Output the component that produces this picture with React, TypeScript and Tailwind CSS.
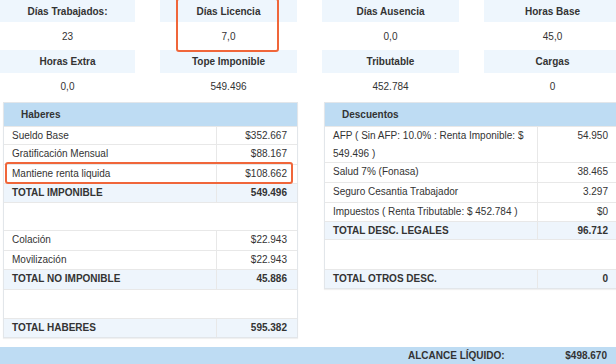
import React from 'react'

type Row = {
  label?: string
  value?: string
  total?: boolean
  h: string
}

const TOP_ITEMS = [
  [
    { title: 'Días Trabajados:', value: '23' },
    { title: 'Días Licencia', value: '7,0' },
    { title: 'Días Ausencia', value: '0,0' },
    { title: 'Horas Base', value: '45,0' },
  ],
  [
    { title: 'Horas Extra', value: '0,0' },
    { title: 'Tope Imponible', value: '549.496' },
    { title: 'Tributable', value: '452.784' },
    { title: 'Cargas', value: '0' },
  ],
]

const HABERES: Row[] = [
  { label: 'Sueldo Base', value: '$352.667', h: 'h-[18px]' },
  { label: 'Gratificación Mensual', value: '$88.167', h: 'h-[20px]' },
  { label: 'Mantiene renta liquida', value: '$108.662', h: 'h-[19px]' },
  { label: 'TOTAL IMPONIBLE', value: '549.496', total: true, h: 'h-[19px]' },
  { h: 'h-[28px]' },
  { label: 'Colación', value: '$22.943', h: 'h-[20px]' },
  { label: 'Movilización', value: '$22.943', h: 'h-[19px]' },
  { label: 'TOTAL NO IMPONIBLE', value: '45.886', total: true, h: 'h-[20px]' },
  { h: 'h-[29px]' },
  { label: 'TOTAL HABERES', value: '595.382', total: true, h: 'h-[19px]' },
]

const DESCUENTOS: Row[] = [
  {
    label: 'AFP ( Sin AFP: 10.0% : Renta Imponible: $ 549.496 )',
    value: '54.950',
    h: 'h-[36px]',
  },
  { label: 'Salud 7% (Fonasa)', value: '38.465', h: 'h-[20px]' },
  { label: 'Seguro Cesantia Trabajador', value: '3.297', h: 'h-[20px]' },
  { label: 'Impuestos ( Renta Tributable: $ 452.784 )', value: '$0', h: 'h-[19px]' },
  { label: 'TOTAL DESC. LEGALES', value: '96.712', total: true, h: 'h-[18px]' },
  { h: 'h-[30px]' },
  { label: 'TOTAL OTROS DESC.', value: '0', total: true, h: 'h-[19px]' },
]

const Tabla = ({ title, rows }: { title: string; rows: Row[] }) => {
  return (
    <div className="w-[295px] border border-[#e2e6ea] shadow-[0_1px_1px_rgba(0,0,0,0.06)]">
      <div className="h-[23px] bg-[#bedcf3] pl-[17px] flex items-center font-bold">
        {title}
      </div>
      {rows.map((row, i) => {
        /** Fila vacía, sin divisor */
        if (!row.label)
          return <div key={i} className={`${row.h} border-t border-[#e8e8e8]`} />
        return (
          <div
            key={i}
            className={`${row.h} flex border-t border-[#e8e8e8] ${
              row.total ? 'bg-[#eef5fc] font-bold' : ''
            }`}
          >
            <div className="w-[213px] pl-[8px] pr-2 leading-[18px] border-r border-[#e8e8e8] flex items-start">
              <span>{row.label}</span>
            </div>
            <div className="flex-1 pr-[10px] leading-[18px] text-right">
              {row.value}
            </div>
          </div>
        )
      })}
    </div>
  )
}

export default function App() {
  return (
    <div className="relative w-[616px] h-[364px] overflow-hidden bg-white font-['Liberation_Sans',Arial,sans-serif] text-[10px] text-[#333]">
      {/* Resumen superior */}
      {TOP_ITEMS.map((group, g) => (
        <div
          key={g}
          className="grid grid-cols-[135px_137px_137px_137px] gap-x-[25px]"
        >
          {group.map((item) => (
            <div
              key={item.title}
              className={`${g === 0 ? 'h-[22px]' : 'h-[23px]'} bg-[#eef6fd] flex items-center justify-center font-bold`}
            >
              {item.title}
            </div>
          ))}
          {group.map((item) => (
            <div
              key={item.title + '-v'}
              className={`${g === 0 ? 'h-[28px]' : 'h-[27px]'} flex items-center justify-center`}
            >
              {item.value}
            </div>
          ))}
        </div>
      ))}

      {/* Tablas */}
      <div className="mt-[2px] flex items-start">
        <div className="ml-[3px]">
          <Tabla title="Haberes" rows={HABERES} />
        </div>
        <div className="ml-[26px]">
          <Tabla title="Descuentos" rows={DESCUENTOS} />
        </div>
      </div>

      {/* Alcance líquido */}
      <div className="mt-[9px] h-[24px] bg-[#bedcf3] flex items-start pt-[3px] leading-[12px] font-bold">
        <span className="ml-[408px]">ALCANCE LÍQUIDO:</span>
        <span className="ml-auto mr-[9px]">$498.670</span>
      </div>

      {/* Marcas de resaltado */}
      <div className="absolute left-[176px] top-[-2px] w-[103px] h-[54px] border-2 border-[#f0663a] rounded-[3px]" />
      <div className="absolute left-[5px] top-[162px] w-[288px] h-[22px] border-2 border-[#f0663a] rounded-[3px]" />
    </div>
  )
}
